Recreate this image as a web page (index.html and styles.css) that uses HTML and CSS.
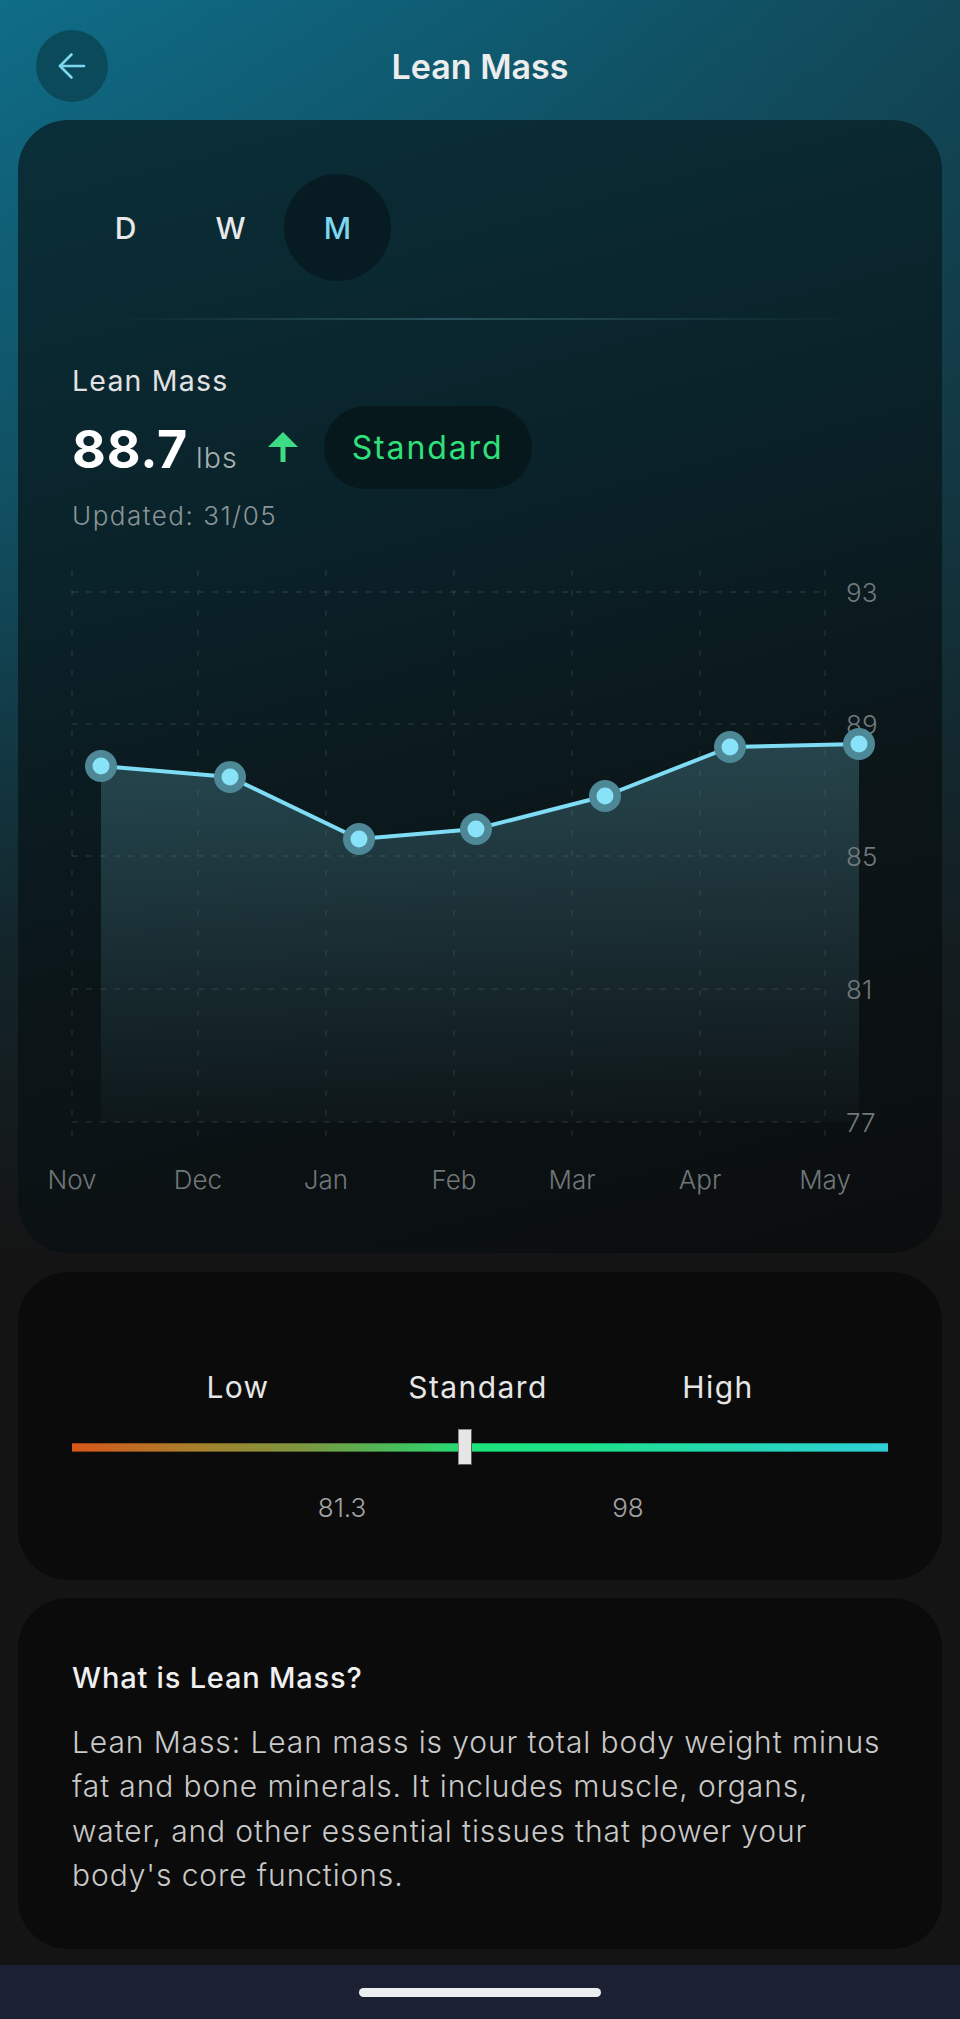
FILE: index.html
```html
<!DOCTYPE html>
<html lang="en">
<head>
<meta charset="utf-8">
<title>Lean Mass</title>
<link rel="stylesheet" href="styles.css">
</head>
<body>
<div class="page">
  <header class="topbar">
    <button class="back" aria-label="Back">
      <svg width="30" height="30" viewBox="0 0 30 30" fill="none" stroke="#7fd6f0" stroke-width="2.6" stroke-linecap="round" stroke-linejoin="round"><path d="M27 15H3"/><path d="M14.5 3.5L3 15l11.5 11.5"/></svg>
    </button>
    <h1 class="title">Lean Mass</h1>
  </header>

  <section class="card card-chart">
    <div class="tabs">
      <span class="tab">D</span>
      <span class="tab">W</span>
      <span class="tab active">M</span>
    </div>
    <div class="divider"></div>
    <div class="metric-label">Lean Mass</div>
    <div class="metric-row">
      <div class="metric-value"><span class="num">88.7</span><span class="unit">lbs</span></div>
      <svg class="up" width="30" height="30" viewBox="0 0 30 30"><polygon points="15,0 30,15 0,15" fill="#3ddc84"/><rect x="12.5" y="14" width="5" height="16" fill="#3ddc84"/></svg>
      <span class="pill">Standard</span>
    </div>
    <div class="updated">Updated: 31/05</div>

    <svg class="chart" width="816" height="640" viewBox="0 0 816 640">
      <defs>
        <linearGradient id="area" x1="0" y1="0" x2="0" y2="1">
          <stop offset="0" stop-color="#4f8896" stop-opacity="0.4"/>
          <stop offset="1" stop-color="#4f8896" stop-opacity="0.04"/>
        </linearGradient>
      </defs>
      <g stroke="rgba(255,255,255,0.09)" stroke-width="1.5" stroke-dasharray="6 14">
        <line x1="0" y1="10" x2="0" y2="584"/>
        <line x1="126" y1="10" x2="126" y2="584"/>
        <line x1="254" y1="10" x2="254" y2="584"/>
        <line x1="382" y1="10" x2="382" y2="584"/>
        <line x1="500" y1="10" x2="500" y2="584"/>
        <line x1="628" y1="10" x2="628" y2="584"/>
        <line x1="753" y1="10" x2="753" y2="584"/>
      </g>
      <g stroke="rgba(255,255,255,0.1)" stroke-width="1.5" stroke-dasharray="6 8">
        <line x1="0" y1="32" x2="753" y2="32"/>
        <line x1="0" y1="164" x2="753" y2="164"/>
        <line x1="0" y1="296" x2="753" y2="296"/>
        <line x1="0" y1="429" x2="753" y2="429"/>
        <line x1="0" y1="562" x2="753" y2="562"/>
      </g>
      <polygon fill="url(#area)" points="29,206 158,217 287,279 404,269 533,236 658,187 787,184 787,562 29,562"/>
      <g class="ylab">
        <text x="774" y="32">93</text>
        <text x="774" y="164">89</text>
        <text x="774" y="296">85</text>
        <text x="774" y="429">81</text>
        <text x="774" y="562">77</text>
      </g>
      <polyline fill="none" stroke="#7fdcf5" stroke-width="4" stroke-linejoin="round" points="29,206 158,217 287,279 404,269 533,236 658,187 787,184"/>
      <g fill="#4e8897">
        <circle cx="29" cy="206" r="16"/>
        <circle cx="158" cy="217" r="16"/>
        <circle cx="287" cy="279" r="16"/>
        <circle cx="404" cy="269" r="16"/>
        <circle cx="533" cy="236" r="16"/>
        <circle cx="658" cy="187" r="16"/>
        <circle cx="787" cy="184" r="16"/>
      </g>
      <g fill="#88e2f8">
        <circle cx="29" cy="206" r="8.5"/>
        <circle cx="158" cy="217" r="8.5"/>
        <circle cx="287" cy="279" r="8.5"/>
        <circle cx="404" cy="269" r="8.5"/>
        <circle cx="533" cy="236" r="8.5"/>
        <circle cx="658" cy="187" r="8.5"/>
        <circle cx="787" cy="184" r="8.5"/>
      </g>
      <g class="xlab">
        <text x="0" y="629">Nov</text>
        <text x="126" y="629">Dec</text>
        <text x="254" y="629">Jan</text>
        <text x="382" y="629">Feb</text>
        <text x="500" y="629">Mar</text>
        <text x="628" y="629">Apr</text>
        <text x="753" y="629">May</text>
      </g>
    </svg>
  </section>

  <section class="card card-range">
    <div class="range-labels">
      <span>Low</span>
      <span>Standard</span>
      <span>High</span>
    </div>
    <div class="range-track">
      <div class="range-bar"></div>
      <div class="range-marker" style="left: 47.3%"></div>
    </div>
    <div class="range-values">
      <span class="rv rv1">81.3</span>
      <span class="rv rv2">98</span>
    </div>
  </section>

  <section class="card card-info">
    <h2 class="info-title">What is Lean Mass?</h2>
    <p class="info-text">Lean Mass: Lean mass is your total body weight minus<br>fat and bone minerals. It includes muscle, organs,<br>water, and other essential tissues that power your<br>body's core functions.</p>
  </section>

  <div class="navbar"><span class="home"></span></div>
</div>
</body>
</html>
```

FILE: styles.css
```css
* { box-sizing: border-box; }
html, body { margin: 0; padding: 0; }
body {
  font-family: "Inter", "Liberation Sans", sans-serif;
  color: #ececec;
  background: #141414;
}
.page {
  width: 960px;
  min-height: 2019px;
  display: flex;
  flex-direction: column;
  background:
    linear-gradient(to bottom, rgba(20,20,20,0) 0px, rgba(20,20,20,0.3) 500px, rgba(20,20,20,0.8) 950px, #141414 1260px),
    linear-gradient(100deg, #0f6d88 0%, #0f5a70 40%, #133a45 100%);
}
.topbar {
  height: 102px;
  padding: 30px 0 0 36px;
  margin-bottom: 18px;
  position: relative;
  display: flex;
  align-items: flex-start;
}
.back {
  width: 72px;
  height: 72px;
  border-radius: 50%;
  border: none;
  padding: 0;
  background: #0b4a5b;
  display: flex;
  align-items: center;
  justify-content: center;
}
.title {
  position: absolute;
  left: 0;
  right: 0;
  top: 30px;
  height: 72px;
  margin: 0;
  display: flex;
  align-items: center;
  justify-content: center;
  font-size: 34px;
  font-weight: 600;
  letter-spacing: 0;
  color: #ededed;
  pointer-events: none;
}
.card {
  margin: 0 18px;
  border-radius: 50px;
  padding: 0 54px;
}
.card-chart {
  background: linear-gradient(165deg, #0a2f39 0%, #0a2229 35%, #0b1518 65%, #0b0d0e 100%);
  padding-top: 54px;
  padding-bottom: 53px;
}
.tabs {
  display: flex;
}
.tab {
  width: 107px;
  height: 107px;
  border-radius: 50%;
  display: flex;
  align-items: center;
  justify-content: center;
  font-size: 30px;
  font-weight: 500;
  color: #e8e8e8;
}
.tab:nth-child(2) { margin-left: -2px; }
.tab.active {
  background: #071c22;
  color: #7fd6f0;
}
.divider {
  margin: 37px 30px 0 38px;
  height: 2px;
  background: linear-gradient(to right, rgba(100,160,175,0) 0%, rgba(100,160,175,0.35) 45%, rgba(100,160,175,0) 100%);
}
.metric-label {
  margin-top: 44px;
  font-size: 28.5px;
  line-height: 34px;
  font-weight: 400;
  letter-spacing: 1.2px;
  color: #e2e2e2;
}
.metric-row {
  margin-top: 8px;
  height: 83px;
  display: flex;
  align-items: center;
}
.metric-value {
  display: flex;
  align-items: baseline;
  margin-top: 4px;
}
.num {
  font-size: 52px;
  font-weight: 700;
  line-height: 60px;
  color: #ffffff;
  letter-spacing: 0.8px;
}
.unit {
  margin-left: 8px;
  font-size: 28.5px;
  font-weight: 300;
  letter-spacing: 1px;
  color: #a9b0b3;
}
.up {
  margin-left: 30px;
  margin-bottom: 2px;
}
.pill {
  margin-left: 26px;
  height: 83px;
  padding: 0 28px;
  border-radius: 42px;
  background: #06181c;
  display: flex;
  align-items: center;
  font-size: 32px;
  font-weight: 400;
  letter-spacing: 1.9px;
  color: #2fe07b;
}
.updated {
  margin-top: 11px;
  font-size: 26px;
  line-height: 32px;
  font-weight: 300;
  letter-spacing: 1.5px;
  color: #8a9497;
}
.chart {
  display: block;
  margin-top: 28px;
  overflow: visible;
}
.ylab text {
  font-family: "Inter", "Liberation Sans", sans-serif;
  font-size: 26px;
  font-weight: 300;
  fill: #72797c;
  dominant-baseline: central;
}
.xlab text {
  font-family: "Inter", "Liberation Sans", sans-serif;
  font-size: 26px;
  font-weight: 300;
  fill: #707779;
  text-anchor: middle;
}
.card-range {
  margin-top: 19px;
  background: #0b0b0b;
  padding-top: 97px;
  padding-bottom: 56px;
}
.range-labels {
  display: grid;
  grid-template-columns: 240px 240px 240px;
  padding-left: 46px;
  font-size: 30px;
  line-height: 36px;
  font-weight: 400;
  letter-spacing: 1.4px;
  color: #e6e6e6;
  text-align: center;
}
.range-track {
  position: relative;
  height: 36px;
  margin-top: 24px;
  display: flex;
  align-items: center;
}
.range-bar {
  width: 100%;
  height: 9px;
  background: linear-gradient(to right, #d8561a 0%, #a8802c 15%, #7d963f 28%, #47be5c 40%, #1de37c 50%, #1ee08f 65%, #24d8b0 80%, #2ecfd6 100%);
  border-top: 1px solid rgba(0,0,0,0.25);
  border-bottom: 1px solid rgba(0,0,0,0.35);
}
.range-marker {
  position: absolute;
  top: 0;
  width: 14px;
  height: 36px;
  background: #e6e6e6;
  border: 1px solid #5a5a5a;
  border-top-color: #8a8a8a;
  border-left-color: #8a8a8a;
}
.range-values {
  margin-top: 27px;
  display: grid;
  grid-template-columns: 220px 100px 186px 100px;
  font-size: 26px;
  line-height: 32px;
  font-weight: 300;
  color: #a3a3a3;
  text-align: center;
}
.rv1 { grid-column: 2; }
.rv2 { grid-column: 4; }
.card-info {
  margin-top: 18px;
  background: #0b0b0b;
  padding-top: 62px;
  padding-bottom: 52px;
}
.info-title {
  margin: 0;
  font-size: 29px;
  line-height: 36px;
  font-weight: 500;
  letter-spacing: 0.8px;
  color: #f0f0f0;
}
.info-text {
  margin: 24px 0 0;
  font-size: 30px;
  line-height: 44.3px;
  font-weight: 300;
  letter-spacing: 0.9px;
  white-space: nowrap;
  color: #c9c9c9;
}
.navbar {
  margin-top: auto;
  height: 54px;
  background: #1b2133;
  display: flex;
  justify-content: center;
  padding-top: 23px;
}
.home {
  width: 242px;
  height: 9px;
  border-radius: 5px;
  background: #eceef0;
}
```
